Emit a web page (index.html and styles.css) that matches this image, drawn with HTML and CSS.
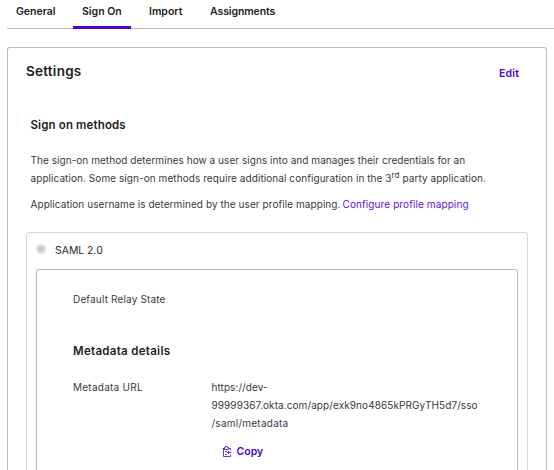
FILE: index.html
```html
<!DOCTYPE html>
<html lang="en">
<head>
<meta charset="utf-8">
<title>Sign On</title>
<link rel="stylesheet" href="styles.css">
</head>
<body>
<nav class="tabs">
  <a class="tab tab-general">General</a>
  <a class="tab tab-sign active">Sign On</a>
  <a class="tab tab-import">Import</a>
  <a class="tab tab-assign">Assignments</a>
</nav>
<main class="panel">
  <header class="panel-head">
    <h1>Settings</h1>
    <a class="edit">Edit</a>
  </header>
  <section class="intro">
    <h2>Sign on methods</h2>
    <p class="desc"><span class="l1">The sign-on method determines how a user signs into and manages their credentials for an</span><br><span class="l2">application. Some sign-on methods require additional configuration in the 3<sup>rd</sup> party application.</span></p>
    <p class="mapping"><span class="l3">Application username is determined by the user profile mapping.</span> <a class="link">Configure profile mapping</a></p>
  </section>
  <section class="method">
    <div class="method-head"><span class="radio"></span><span class="saml">SAML 2.0</span></div>
    <div class="details">
      <div class="relay">Default Relay State</div>
      <h2 class="meta">Metadata details</h2>
      <div class="row">
        <div class="label">Metadata URL</div>
        <div class="value">
          <div class="u1">https://dev-</div>
          <div class="u2">99999367.okta.com/app/exk9no4865kPRGyTH5d7/sso</div>
          <div class="u3">/saml/metadata</div>
          <a class="copy"><svg width="10" height="12" viewBox="0 0 10 12" fill="none" stroke="currentColor"><path d="M1.5 2.5v8h7v-2M.5 2.5h2M6.5 2.5h2v2M2.5 3.5v-2h1v-1h2v1h1v2zM3 5.5h2M3 8.5h2M9.5 6.5h-4M7 5l-1.5 1.5L7 8"/></svg><span>Copy</span></a>
        </div>
      </div>
    </div>
  </section>
</main>
</body>
</html>
```
FILE: styles.css
```css
* { box-sizing: border-box; }
body { margin: 0; height: 470px; overflow: hidden; background: #fff; color: #38383f; font: 10px/18px Inter, "Liberation Sans", sans-serif; letter-spacing: .07px; white-space: nowrap; }
h1, h2, p { margin: 0; }
.tabs { display: flex; height: 29px; margin-left: 7px; border-bottom: 1px solid #bcbbc6; letter-spacing: 0; }
.tab { flex: none; height: 29px; padding: 3px 9px 0; color: #1d1d21; font-size: 10.5px; font-weight: 600; }
.tab-general { width: 66px; }
.tab-sign { width: 58px; }
.tab-import { width: 62px; padding-left: 18px; }
.tab-assign { padding-left: 17px; letter-spacing: -.1px; }
.active { border-bottom: 3px solid #4c00e0; }
.panel { width: 540px; height: 423px; overflow: hidden; margin: 18px 0 0 7px; padding: 0 18px; border: 1px solid #bcbbc6; border-bottom: 0; border-radius: 3px 3px 0 0; }
.panel-head { display: flex; justify-content: space-between; height: 68px; padding: 13px 9px 0 0; }
h1 { color: #1d1d21; font-size: 13.5px; line-height: 20px; font-weight: 600; letter-spacing: .25px; }
.edit { padding-top: 4px; color: #4c00e0; font-size: 10.5px; font-weight: 600; letter-spacing: .15px; }
.intro { height: 116px; padding-left: 4.5px; }
h2 { color: #1d1d21; font-size: 11.5px; line-height: 18px; font-weight: 600; letter-spacing: .13px; }
.desc { margin-top: 17px; }
.l1 { letter-spacing: .05px; }
sup { font-size: 8px; line-height: 0; vertical-align: 4px; }
.mapping { display: flex; gap: 2px; margin-top: 8px; }
.link { color: #5716dc; letter-spacing: .1px; }
.method { width: 502px; height: 239px; overflow: hidden; padding: 0 9px; border: 1px solid #d7d7dc; border-bottom: 0; border-radius: 3px 3px 0 0; }
.method-head { display: flex; gap: 9px; height: 36px; padding-top: 9px; }
.radio { width: 10px; height: 10px; margin-top: 2px; border: 1px solid #d5d5d5; border-radius: 50%; background: #c8c8c8; box-shadow: inset 0 0 0 1px #eee; }
.saml { color: #2b2b31; font-size: 10.5px; letter-spacing: -.05px; }
.details { height: 202px; padding: 20px 36px 0; border: 1px solid #b5b4c0; border-bottom: 0; border-radius: 3px 3px 0 0; }
.relay { letter-spacing: .16px; }
.meta { margin-top: 34px; letter-spacing: .3px; }
.row { display: flex; margin-top: 18px; }
.label { width: 138.5px; letter-spacing: .25px; }
.u2 { letter-spacing: .09px; }
.u3 { letter-spacing: .25px; }
.copy { display: flex; gap: 5px; margin: 10px 0 0 10px; color: #4c00e0; font-size: 10.5px; font-weight: 600; letter-spacing: 0; }
.copy span { padding-top: 1px; }
.copy svg { margin-top: 4px; stroke-opacity: .8; }
```
